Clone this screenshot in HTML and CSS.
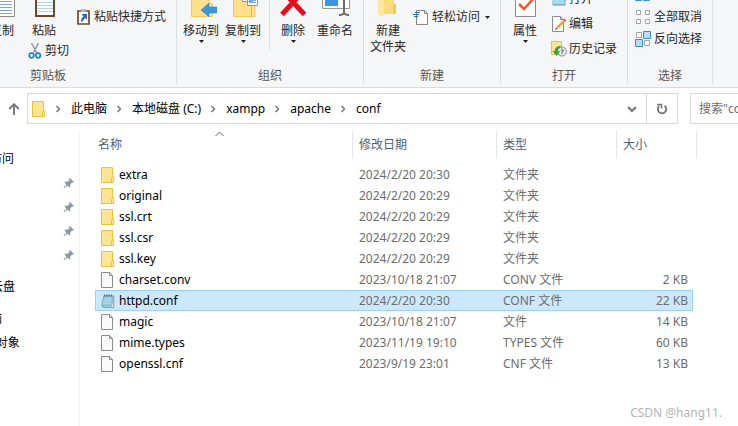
FILE: index.html
```
<!DOCTYPE html>
<html lang="zh-CN">
  <head>
    <meta charset="utf-8">
    <title>conf</title>
    <link rel="stylesheet" href="styles.css">
  </head>
  <body>
    <!-- Shared icons -->
    <svg class="sprite" width="0" height="0">
      <symbol id="folder" viewBox="0 0 14 16">
        <path d="M.5.5h11v9.2h1.2v5.8H.5z" fill="#ffe493" stroke="#eac13e"/>
        <path d="M10.5 15.5v-4.3l1-1.5" fill="none" stroke="#eac13e"/>
      </symbol>
      <symbol id="file" viewBox="0 0 14 16">
        <path d="M.5.5h8l3 3v12h-11z" fill="#fafafa" stroke="#8c8c8c"/>
        <path d="M8.5.5v3h3" fill="none" stroke="#8c8c8c"/>
      </symbol>
      <symbol id="notepad" viewBox="0 0 16 16">
        <path d="M4 2.5h10.5v13H3z" fill="#fff" stroke="#9c835b"/>
        <path d="M3 2h11l-1.6 12H.6z" fill="#8ecbdc" stroke="#6a9dab" stroke-width=".7"/>
        <path d="M3.4 5.5h8.8M3 8h8.8M2.6 10.5h8.8" stroke="#c4e8f0" stroke-width=".8"/>
        <path d="M4 .5v2.5M6 .5v2.5M8 .5v2.5M10 .5v2.5M12 .5v2.5" stroke="#596b70"/>
      </symbol>
      <symbol id="pin" viewBox="0 0 12 12">
        <path d="M7 1l4 4-1 .8-.8-.2-2 2 .1 2-1 .9-2-2L1 11.3l-.5-.5 3-3.3-2-1.9 1-1 2 .1 2-2-.3-.9z" fill="#8b98a3"/>
      </symbol>
      <symbol id="chevron" viewBox="0 0 8 8">
        <path d="M2.5 1l3 3-3 3" fill="none" stroke="#777" stroke-width="1.5"/>
      </symbol>
      <symbol id="caret" viewBox="0 0 5 3">
        <path d="M0 0h5L2.500 3z" fill="#222"/>
      </symbol>
    </svg>

    <div class="ribbon">
      <section class="group group-clipboard">
        <div class="group-body">
          <button class="big copy">
            <svg width="32" height="32" viewBox="0 0 32 32">
              <path d="M8.5 4.5h15l5 5v22h-20z" fill="#fff" stroke="#8a8a8a"/>
              <path d="M12 13.500h14M12 16.500h14M12 19.500h14M12 22.500h14M12 25.500h14M12 28.500h14" stroke="#78a7e8"/>
            </svg>
            <span>复制</span>
          </button>
          <div class="paste-col">
            <button class="big">
              <svg width="32" height="32" viewBox="0 0 32 32">
                <path d="M7 2h20v30H7z" fill="#71462b"/>
                <path d="M9 5h16v25H9z" fill="#f7fafc"/>
                <path d="M9 17.500h16M9 20.500h16M9 23.500h16M9 26.500h16" stroke="#b5d4e8"/>
              </svg>
              <span>粘贴</span>
            </button>
            <button class="small">
              <svg width="14" height="16" viewBox="0 0 14 16">
                <path d="M3.5 0L9 10.5M10.5 0L5 10.5" stroke="#9299a5" stroke-width="1.5"/>
                <circle cx="3.5" cy="12.500" r="2.300" fill="none" stroke="#1887cc" stroke-width="1.700"/>
                <circle cx="10" cy="12.500" r="2.300" fill="none" stroke="#1887cc" stroke-width="1.700"/>
              </svg>
              <span>剪切</span>
            </button>
          </div>
          <button class="small shortcut">
            <svg width="14" height="16" viewBox="0 0 14 16">
              <path d="M1 2h11v13H1z" fill="#fff" stroke="#71462b" stroke-width="1.700"/>
              <path d="M4 2.5V1h5v1.500" fill="#eee" stroke="#888"/>
              <path d="M4.500 5H10v5.500L8.300 9C7 10 6.200 11 6 12.500H4c0-2.500 1-4 2.500-5.300z" fill="#2a67b5"/>
            </svg>
            <span>粘贴快捷方式</span>
          </button>
        </div>
        <h2>剪贴板</h2>
      </section>

      <section class="group group-organize">
        <div class="group-body">
          <button class="big">
            <svg width="32" height="32" viewBox="0 0 32 32">
              <path d="M6.500 2.500h18v16h3v13h-21z" fill="#ffe08a" stroke="#efc95c"/>
              <path d="M32 22h-8v-4l-8 7 8 7v-4h8z" fill="#3c96dd" stroke="#2b7fc4" stroke-width=".5"/>
            </svg>
            <span>移动到</span>
            <svg class="drop" width="5" height="3"><use href="#caret"/></svg>
          </button>
          <button class="big">
            <svg width="32" height="32" viewBox="0 0 32 32">
              <path d="M6.500 2.500h18v18h3.500v11h-21.500z" fill="#ffe08a" stroke="#efc95c"/>
              <path d="M24.500 31.500v-10" stroke="#e8b93c"/>
              <path d="M15.500 7.500h10v9h-10zM20.500 10.500h10v10h-10z" fill="#fff" stroke="#8999ac"/>
              <path d="M22 13.500h7M22 15.500h7M22 17.500h7" stroke="#78a7e8"/>
            </svg>
            <span>复制到</span>
            <svg class="drop" width="5" height="3"><use href="#caret"/></svg>
          </button>
          <i class="divider"></i>
          <button class="big delete">
            <svg width="32" height="32" viewBox="0 0 32 32">
              <path d="M5.500 6l22 23.500M26.500 6L5 29.500" stroke="#e30f1e" stroke-width="5"/>
            </svg>
            <span>删除</span>
            <svg class="drop" width="5" height="3"><use href="#caret"/></svg>
          </button>
          <button class="big">
            <svg width="32" height="32" viewBox="0 0 32 32">
              <path d="M3.500 9.500h27v14h-27z" fill="#fff" stroke="#9a9a9a"/>
              <path d="M6 12h13v9H6z" fill="#3a95e4"/>
              <path d="M25 6v22M20 30c3 0 5-1 5-3 0 2 2 3 5 3" fill="none" stroke="#6c6c6c" stroke-width="2"/>
            </svg>
            <span>重命名</span>
          </button>
        </div>
        <h2>组织</h2>
      </section>

      <section class="group group-new">
        <div class="group-body">
          <button class="big">
            <svg width="32" height="32" viewBox="0 0 32 32">
              <path d="M8 2h14v17h2v10H8z" fill="#ffdb7c"/>
              <path d="M6 2l6 5v21l-2 4-4-3z" fill="#ffe7a3"/>
              <path d="M21 29v-8l1-2h2v10z" fill="#f3c85b"/>
            </svg>
            <span>新建<br>文件夹</span>
          </button>
          <div class="small-col">
            <button class="small" aria-label="新建项目">
              <svg width="16" height="16" viewBox="0 0 16 16">
                <path d="M8.500 4.500h6v8h-6z" fill="#fff" stroke="#888"/>
                <path d="M10 7.500h3M10 10h3" stroke="#58a0df"/>
              </svg>
            </button>
            <button class="small">
              <svg width="16" height="16" viewBox="0 0 16 16">
                <path d="M3.500 1.500h8l3 3v11h-11z" fill="#fff" stroke="#888"/>
                <path d="M11.500 1.500v3h3" fill="none" stroke="#888"/>
                <path d="M2 3.500h5M0 5.500h6M1 7.500h4" stroke="#246fb5"/>
              </svg>
              <span>轻松访问</span>
              <svg class="side-drop" width="5" height="3"><use href="#caret"/></svg>
            </button>
          </div>
        </div>
        <h2>新建</h2>
      </section>

      <section class="group group-open">
        <div class="group-body">
          <button class="big">
            <svg width="32" height="32" viewBox="0 0 32 32">
              <path d="M6.500 2.500h20v29h-20z" fill="#fff" stroke="#8c8c8c"/>
              <path d="M10 19l5 5 9-10" fill="none" stroke="#f05a28" stroke-width="2.500"/>
            </svg>
            <span>属性</span>
            <svg class="drop" width="5" height="3"><use href="#caret"/></svg>
          </button>
          <div class="small-col tall">
            <button class="small">
              <svg width="16" height="16" viewBox="0 0 16 16">
                <path d="M2 2h12v12H2z" fill="#79c1db" stroke="#729ca9"/>
                <path d="M0 5h12l2 8H2z" fill="#a6dbe9"/>
              </svg>
              <span>打开</span>
            </button>
            <button class="small">
              <svg width="16" height="16" viewBox="0 0 16 16">
                <path d="M1.500.5h8l3 3v12h-11z" fill="#fff" stroke="#8c8c8c"/>
                <path d="M9.500.5v3h3" fill="none" stroke="#8c8c8c"/>
                <path d="M6 12l7-7" stroke="#f0a52b" stroke-width="2.500"/>
                <path d="M13 5l1.500-1.500" stroke="#d66" stroke-width="2.500"/>
                <path d="M4 14l1-2.500 1.500 1.500z" fill="#555"/>
              </svg>
              <span>编辑</span>
            </button>
            <button class="small">
              <svg width="16" height="16" viewBox="0 0 16 16">
                <path d="M.5.5h10v13H.5z" fill="#ffe493" stroke="#eac13e"/>
                <circle cx="11" cy="10.500" r="4.500" fill="#e4e7e9" stroke="#868e94"/>
                <path d="M11 7.500v3l2-1.500M11 10.500v2.500" fill="none" stroke="#666"/>
                <path d="M9.500 5C6 5 3.700 7 3.700 10H1.500l4 5 3.500-5H6.700c0-2 .8-3 2.800-3.500z" fill="#2fa936"/>
              </svg>
              <span>历史记录</span>
            </button>
          </div>
        </div>
        <h2>打开</h2>
      </section>

      <section class="group group-select">
        <div class="group-body">
          <div class="small-col select-col">
            <button class="small" aria-label="全部选择">
              <svg width="16" height="16" viewBox="0 0 16 16">
                <path d="M.5.5h6v6h-6zM8.500.5h6v6h-6zM.5 7.500h6v6h-6zM8.500 7.500h6v6h-6z" fill="#b9dcfa" stroke="#2f8edf"/>
              </svg>
            </button>
            <button class="small">
              <svg width="16" height="16" viewBox="0 0 16 16">
                <path d="M1.500 1.500h4v4h-4zM10.500 1.500h4v4h-4zM1.500 10.500h4v4h-4zM10.500 10.500h4v4h-4z" fill="#fff" stroke="#a5a5a5"/>
              </svg>
              <span>全部取消</span>
            </button>
            <button class="small">
              <svg width="16" height="16" viewBox="0 0 16 16">
                <path d="M1.500 1.500h5v5h-5zM9.500 9.500h5v5h-5z" fill="#fff" stroke="#a5a5a5"/>
                <path d="M8.500.5h7v7h-7zM.5 8.500h7v7h-7z" fill="#b9dcfa" stroke="#2f8edf"/>
              </svg>
              <span>反向选择</span>
            </button>
          </div>
        </div>
        <h2>选择</h2>
      </section>
    </div>

    <div class="nav">
      <button class="up" aria-label="上移">
        <svg width="12" height="12" viewBox="0 0 12 12">
          <path d="M6 12V1.500M1.200 6L6 1.200 10.800 6" fill="none" stroke="#747474" stroke-width="1.800"/>
        </svg>
      </button>
      <div class="address">
        <svg width="14" height="16"><use href="#folder"/></svg>
        <svg class="sep" width="8" height="8"><use href="#chevron"/></svg>
        <button>此电脑</button>
        <svg class="sep" width="8" height="8"><use href="#chevron"/></svg>
        <button>本地磁盘 (C:)</button>
        <svg class="sep" width="8" height="8"><use href="#chevron"/></svg>
        <button>xampp</button>
        <svg class="sep" width="8" height="8"><use href="#chevron"/></svg>
        <button>apache</button>
        <svg class="sep" width="8" height="8"><use href="#chevron"/></svg>
        <button>conf</button>
        <button class="history" aria-label="历史">
          <svg width="10" height="8" viewBox="0 0 10 8">
            <path d="M1 2l4 4 4-4" fill="none" stroke="#747474" stroke-width="2"/>
          </svg>
        </button>
        <button class="refresh" aria-label="刷新">
          <svg width="12" height="12" viewBox="0 0 12 12">
            <path d="M8.600 2.800A4.200 4.200 0 1 1 3.200 3" fill="none" stroke="#747474" stroke-width="1.800"/>
            <path d="M1 1.500h4.500v4" fill="none" stroke="#747474" stroke-width="1.500"/>
          </svg>
        </button>
      </div>
      <input class="search" type="text" placeholder='搜索"conf"' aria-label="搜索">
    </div>

    <div class="main">
      <ul class="sidebar">
        <li>快速访问</li>
        <li class="pinned"><svg width="12" height="12"><use href="#pin"/></svg></li>
        <li class="pinned"><svg width="12" height="12"><use href="#pin"/></svg></li>
        <li class="pinned"><svg width="12" height="12"><use href="#pin"/></svg></li>
        <li class="pinned"><svg width="12" height="12"><use href="#pin"/></svg></li>
        <li class="root">WPS云盘</li>
        <li class="root">此电脑</li>
        <li class="child">3D 对象</li>
      </ul>

      <div class="files">
        <table>
          <colgroup>
            <col class="col-name">
            <col class="col-date">
            <col class="col-type">
            <col class="col-size">
            <col class="col-end">
          </colgroup>
          <thead>
            <tr>
              <th class="sorted">名称
                <svg width="9" height="6" viewBox="0 0 9 6">
                  <path d="M.5 5l4-4 4 4" fill="none" stroke="#666"/>
                </svg>
              </th>
              <th>修改日期</th>
              <th>类型</th>
              <th colspan="2">大小</th>
            </tr>
          </thead>
          <tbody>
            <tr>
              <td><div class="name"><svg width="14" height="16"><use href="#folder"/></svg>extra</div></td>
              <td>2024/2/20 20:30</td>
              <td>文件夹</td>
              <td></td>
            </tr>
            <tr>
              <td><div class="name"><svg width="14" height="16"><use href="#folder"/></svg>original</div></td>
              <td>2024/2/20 20:29</td>
              <td>文件夹</td>
              <td></td>
            </tr>
            <tr>
              <td><div class="name"><svg width="14" height="16"><use href="#folder"/></svg>ssl.crt</div></td>
              <td>2024/2/20 20:29</td>
              <td>文件夹</td>
              <td></td>
            </tr>
            <tr>
              <td><div class="name"><svg width="14" height="16"><use href="#folder"/></svg>ssl.csr</div></td>
              <td>2024/2/20 20:29</td>
              <td>文件夹</td>
              <td></td>
            </tr>
            <tr>
              <td><div class="name"><svg width="14" height="16"><use href="#folder"/></svg>ssl.key</div></td>
              <td>2024/2/20 20:29</td>
              <td>文件夹</td>
              <td></td>
            </tr>
            <tr>
              <td><div class="name"><svg width="14" height="16"><use href="#file"/></svg>charset.conv</div></td>
              <td>2023/10/18 21:07</td>
              <td>CONV 文件</td>
              <td>2 KB</td>
            </tr>
            <tr class="selected">
              <td><div class="name"><svg width="14" height="16"><use href="#notepad"/></svg>httpd.conf</div></td>
              <td>2024/2/20 20:30</td>
              <td>CONF 文件</td>
              <td>22 KB</td>
            </tr>
            <tr>
              <td><div class="name"><svg width="14" height="16"><use href="#file"/></svg>magic</div></td>
              <td>2023/10/18 21:07</td>
              <td>文件</td>
              <td>14 KB</td>
            </tr>
            <tr>
              <td><div class="name"><svg width="14" height="16"><use href="#file"/></svg>mime.types</div></td>
              <td>2023/11/19 19:10</td>
              <td>TYPES 文件</td>
              <td>60 KB</td>
            </tr>
            <tr>
              <td><div class="name"><svg width="14" height="16"><use href="#file"/></svg>openssl.cnf</div></td>
              <td>2023/9/19 23:01</td>
              <td>CNF 文件</td>
              <td>13 KB</td>
            </tr>
          </tbody>
        </table>
      </div>
    </div>
    <div class="watermark">CSDN @hang11.</div>
  </body>
</html>
```
FILE: styles.css
```
* {
  box-sizing: border-box;
}
html {
  height: 100%;
}
body {
  margin: 0;
  height: 100%;
  display: flex;
  flex-direction: column;
  overflow: hidden;
  background-color: #fff;
  color: #000;
  font-family: "Noto Sans", "Noto Sans CJK SC", sans-serif;
  font-size: 12px;
  line-height: 16px;
}
button {
  padding: 0;
  border: none;
  background-color: transparent;
  color: inherit;
  font: inherit;
  white-space: nowrap;
}
svg {
  display: block;
  flex: none;
}
.sprite {
  position: absolute;
}

/* Ribbon, scrolled up under the top edge */
.ribbon {
  flex: none;
  height: 88px;
  display: flex;
  align-items: flex-end;
  overflow: hidden;
  padding-bottom: 3px;
  background-color: #f5f6f7;
  border-bottom: 1px solid #dadbdc;
  color: #262626;
}
.group {
  flex: none;
  height: 100px;
  display: flex;
  flex-direction: column;
  border-right: 1px solid #dcdddf;
}
.group-body {
  height: 84px;
  display: flex;
  align-items: flex-start;
}
.group h2 {
  margin: 0;
  font-size: 12px;
  font-weight: normal;
  line-height: 16px;
  text-align: center;
  color: #555;
}
.big {
  width: 42px;
  padding-top: 1px;
  display: flex;
  flex-direction: column;
  align-items: center;
}
.big span {
  margin-top: 6px;
}
.big .drop {
  margin-top: 1px;
}
.small {
  height: 16px;
  display: flex;
  align-items: center;
  gap: 3px;
}
.small .side-drop {
  margin-left: 2px;
}
.small-col {
  display: flex;
  flex-direction: column;
  gap: 6px;
}
.group-clipboard {
  width: 257px;
  margin-left: -80px;
}
.group-clipboard .group-body {
  justify-content: flex-end;
  padding-right: 10px;
}
.copy {
  margin-right: 5px;
}
.paste-col {
  display: flex;
  flex-direction: column;
  gap: 4px;
  margin-right: 8px;
}
.paste-col .big {
  width: 32px;
}
.shortcut {
  margin-top: 25px;
}
.group-organize {
  width: 187px;
}
.group-organize .group-body {
  padding-left: 3px;
}
.divider {
  width: 1px;
  height: 66px;
  margin-left: 5px;
  background-color: #dcdddf;
}
.delete {
  margin-left: 2px;
}
.group-new {
  width: 137px;
}
.group-new .group-body {
  padding-left: 3px;
  gap: 4px;
}
.group-new .small-col,
.select-col {
  padding-top: 3px;
}
.group-open {
  width: 127px;
}
.group-open .group-body {
  padding-left: 3px;
  gap: 5px;
}
.small-col.tall {
  padding-top: 7px;
  gap: 9px;
}
.tall .small {
  gap: 2px;
}
.group-select {
  width: 85px;
}
.group-select .group-body {
  padding-left: 7px;
}

/* Address bar */
.nav {
  flex: none;
  display: flex;
  padding-top: 5px;
}
.up {
  width: 27px;
  display: flex;
  align-items: center;
  justify-content: center;
}
.address {
  flex: 1;
  height: 31px;
  display: flex;
  align-items: center;
  padding-left: 4px;
  border: 1px solid #d9d9d9;
}
.sep {
  margin: 0 9px 0 8px;
}
.history {
  margin-left: auto;
  padding: 0 9px;
}
.refresh {
  width: 31px;
  height: 29px;
  display: flex;
  align-items: center;
  justify-content: center;
  border-left: 1px solid #d9d9d9;
}
.search {
  width: 220px;
  height: 31px;
  margin-left: 12px;
  margin-right: -172px;
  padding: 0 8px;
  border: 1px solid #d9d9d9;
  font: inherit;
}
.search::placeholder {
  color: #6d6d6d;
}

/* Tree and file list */
.main {
  flex: 1;
  display: flex;
  padding-top: 7px;
}
.sidebar {
  flex: none;
  width: 114px;
  margin: 0 0 0 -34px;
  padding: 16px 0 0;
  list-style: none;
  border-right: 1px solid #f2f2f2;
}
.sidebar li {
  height: 24px;
  line-height: 24px;
  white-space: nowrap;
}
.sidebar .pinned {
  display: flex;
  align-items: center;
  justify-content: flex-end;
  padding-right: 4px;
}
.sidebar .root {
  margin-top: 8px;
}
.sidebar .child {
  padding-left: 11px;
}
.files {
  flex: 1;
  padding-left: 15px;
}
table {
  width: 602px;
  table-layout: fixed;
  border-collapse: separate;
  border-spacing: 0;
}
.col-name {
  width: 258px;
}
.col-date {
  width: 144px;
}
.col-type {
  width: 120px;
}
.col-size {
  width: 76px;
}
.col-end {
  width: 4px;
}
th {
  position: relative;
  height: 27px;
  padding: 0 6px;
  border-right: 1px solid #e5e5e5;
  color: #4c607a;
  font-weight: normal;
  text-align: left;
}
th:first-child {
  padding-left: 3px;
}
/* the sort arrow is centred over the whole column, icon gutter included */
.sorted svg {
  position: absolute;
  top: 0;
  right: 50%;
}
tbody::before {
  content: '';
  display: block;
  height: 6px;
}
td {
  height: 21px;
  padding: 0 5px 0 6px;
  border: 0 solid #99d1ff;
  color: #6d6d6d;
  line-height: 18px;
}
td:first-child {
  color: #000;
}
td:last-child {
  text-align: right;
}
.name {
  display: flex;
  align-items: center;
  gap: 4px;
}
.selected td {
  background-color: #cce8ff;
  border-width: 1px 0;
}
.selected td:first-child {
  border-left-width: 1px;
  padding-left: 5px;
}
.selected td:last-child {
  border-right-width: 1px;
  padding-right: 4px;
}
.watermark {
  position: absolute;
  right: 16px;
  bottom: 5px;
  color: #b4b4b4;
}
```
